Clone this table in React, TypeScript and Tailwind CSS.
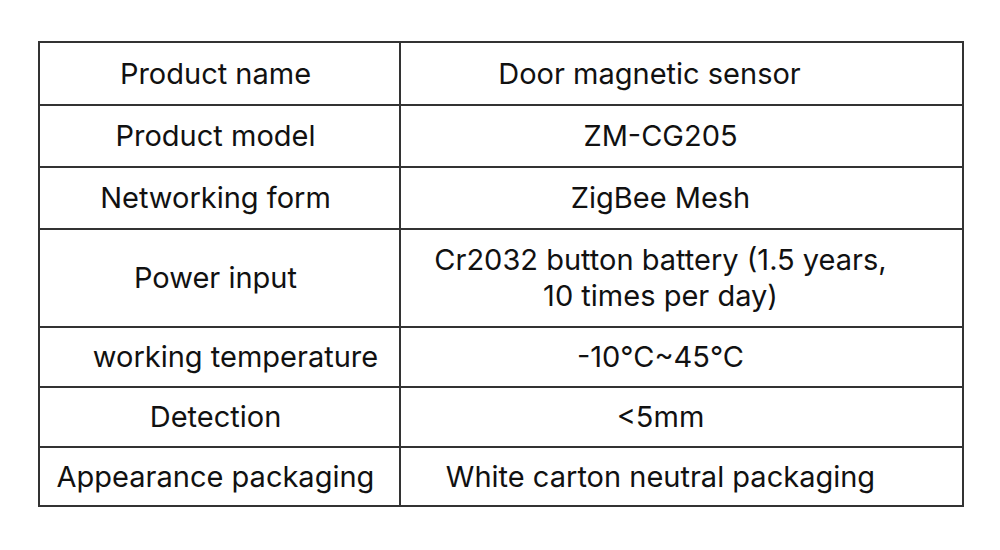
const rows: { label: string; value: string[]; h: string; labelClass?: string; valueClass?: string }[] = [
  { label: 'Product name', value: ['Door magnetic sensor'], h: 'h-[63px]', valueClass: 'pr-[64px]' },
  { label: 'Product model', value: ['ZM-CG205'], h: 'h-[62px]' },
  { label: 'Networking form', value: ['ZigBee Mesh'], h: 'h-[62px]' },
  { label: 'Power input', value: ['Cr2032 button battery (1.5 years,', '10 times per day)'], h: 'h-[98px]' },
  { label: 'working temperature', value: ['-10°C~45°C'], h: 'h-[60px]', labelClass: 'pl-[40px]' },
  { label: 'Detection', value: ['<5mm'], h: 'h-[60px]' },
  { label: 'Appearance packaging', value: ['White carton neutral packaging'], h: 'h-[57px]' },
];

export default function App() {
  return (
    <div className="w-[1000px] h-[550px] bg-white pt-[41px] pl-[38px] font-['Inter','Noto_Sans',sans-serif] text-[#111]">
      <div className="w-[926px] border-2 border-[#333]">
        {rows.map((r, i) => (
          <div
            key={r.label}
            className={`flex ${r.h} ${i < rows.length - 1 ? 'border-b-2 border-[#333]' : ''}`}
          >
            <div
              className={`w-[361px] shrink-0 border-r-2 border-[#333] flex items-center justify-center text-[29px] whitespace-nowrap pr-[8px] ${r.labelClass ?? ''}`}
            >
              {r.label}
            </div>
            <div
              className={`flex-1 flex flex-col items-center justify-center text-[29px] leading-[36px] whitespace-nowrap pr-[42px] ${r.valueClass ?? ''}`}
            >
              {r.value.map((v) => (
                <span key={v}>{v}</span>
              ))}
            </div>
          </div>
        ))}
      </div>
    </div>
  );
}
